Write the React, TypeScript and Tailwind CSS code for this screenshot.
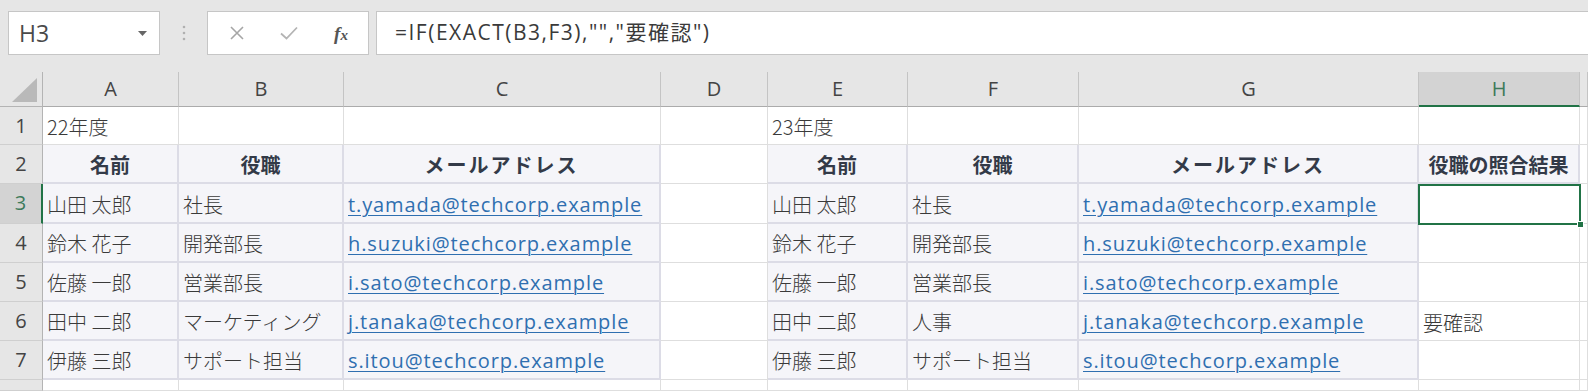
import React from "react";

const COLS = [
  { key: "A", w: 136 },
  { key: "B", w: 165 },
  { key: "C", w: 317 },
  { key: "D", w: 107 },
  { key: "E", w: 140 },
  { key: "F", w: 171 },
  { key: "G", w: 340 },
  { key: "H", w: 161 },
  { key: "I", w: 8 },
];

const ROW_H = [38, 39, 40, 39, 39, 39, 39, 11];

type Cell = { t?: string; kind?: "head" | "body" | "link" | "plain"; table?: boolean };

const people22 = [
  ["山田 太郎", "社長", "t.yamada@techcorp.example"],
  ["鈴木 花子", "開発部長", "h.suzuki@techcorp.example"],
  ["佐藤 一郎", "営業部長", "i.sato@techcorp.example"],
  ["田中 二郎", "マーケティング", "j.tanaka@techcorp.example"],
  ["伊藤 三郎", "サポート担当", "s.itou@techcorp.example"],
];
const people23 = [
  ["山田 太郎", "社長", "t.yamada@techcorp.example", ""],
  ["鈴木 花子", "開発部長", "h.suzuki@techcorp.example", ""],
  ["佐藤 一郎", "営業部長", "i.sato@techcorp.example", ""],
  ["田中 二郎", "人事", "j.tanaka@techcorp.example", "要確認"],
  ["伊藤 三郎", "サポート担当", "s.itou@techcorp.example", ""],
];

function buildRows(): Cell[][] {
  const rows: Cell[][] = [];
  rows.push([
    { t: "22年度" }, {}, {}, {}, { t: "23年度" }, {}, {}, {}, {},
  ]);
  rows.push([
    { t: "名前", kind: "head", table: true },
    { t: "役職", kind: "head", table: true },
    { t: "メールアドレス", kind: "head", table: true },
    {},
    { t: "名前", kind: "head", table: true },
    { t: "役職", kind: "head", table: true },
    { t: "メールアドレス", kind: "head", table: true },
    { t: "役職の照合結果", kind: "head", table: true },
    {},
  ]);
  for (let i = 0; i < 5; i++) {
    const a = people22[i];
    const b = people23[i];
    rows.push([
      { t: a[0], table: true },
      { t: a[1], table: true },
      { t: a[2], kind: "link", table: true },
      {},
      { t: b[0], table: true },
      { t: b[1], table: true },
      { t: b[2], kind: "link", table: true },
      { t: b[3] },
      {},
    ]);
  }
  rows.push([{}, {}, {}, {}, {}, {}, {}, {}, {}]);
  return rows;
}

const CJK = { fontFamily: '"Noto Sans CJK JP", "Noto Sans", sans-serif' };
const UI = { fontFamily: '"Open Sans", "Noto Sans", "Noto Sans CJK JP", sans-serif' };
const LINK = { fontFamily: '"Open Sans", "Noto Sans CJK JP", sans-serif' };

function CellView({ c, w, h }: { c: Cell; w: number; h: number }) {
  const base = c.table
    ? "bg-[#f5f5f9] border-r-2 border-b-2 border-[#dcdce6]"
    : "bg-white border-r border-b border-[#dedede]";
  let inner: React.ReactNode = null;
  if (c.t) {
    if (c.kind === "head") {
      inner = (
        <span
          className={`w-full text-center font-bold text-[20px] text-[#333a48] ${c.t === "メールアドレス" ? "tracking-[2px]" : ""}`}
          style={CJK}
        >
          {c.t}
        </span>
      );
    } else if (c.kind === "link") {
      inner = (
        <span
          className="pl-[4px] text-[20px] tracking-[0.9px] text-[#2f6fb0] underline underline-offset-[3px] decoration-1 whitespace-nowrap"
          style={LINK}
        >
          {c.t}
        </span>
      );
    } else {
      inner = (
        <span className="pl-[4px] text-[20px] font-light text-[#3a3a3a] whitespace-nowrap" style={CJK}>
          {c.t}
        </span>
      );
    }
  }
  return (
    <div
      className={`flex items-end pb-[3px] overflow-hidden leading-[28px] ${base}`}
      style={{ width: w, height: h }}
    >
      {inner}
    </div>
  );
}

export default function App() {
  const rows = buildRows();
  return (
    <div className="w-[1588px] h-[391px] bg-[#e6e6e6] overflow-hidden relative">
      {/* formula bar */}
      <div className="flex items-start pt-[11px] h-[72px]">
        <div className="ml-[8px] w-[152px] h-[44px] bg-white border border-[#c6c6c6] flex items-center justify-between pl-[10px] pr-[12px]">
          <span className="text-[23px] text-[#4a4a4a]" style={UI}>H3</span>
          <svg width="9" height="5" viewBox="0 0 9 5">
            <path d="M0 0 L9 0 L4.5 5 Z" fill="#666" />
          </svg>
        </div>
        <div className="w-[47px] h-[44px] flex items-center justify-center">
          <svg width="4" height="16" viewBox="0 0 4 16">
            <circle cx="2" cy="2" r="1.3" fill="#b0b0b0" />
            <circle cx="2" cy="8" r="1.3" fill="#b0b0b0" />
            <circle cx="2" cy="14" r="1.3" fill="#b0b0b0" />
          </svg>
        </div>
        <div className="w-[162px] h-[44px] bg-white border border-[#c6c6c6] flex items-center">
          <div className="w-[56px] flex justify-center pl-[1px]">
            <svg width="14" height="14" viewBox="0 0 14 14">
              <path d="M1 1 L13 13 M13 1 L1 13" stroke="#a6a6a6" strokeWidth="1.6" />
            </svg>
          </div>
          <div className="w-[50px] flex justify-center">
            <svg width="18" height="14" viewBox="0 0 18 14">
              <path d="M1 7.5 L6.5 12.5 L17 1.5" stroke="#b4b4b4" strokeWidth="1.8" fill="none" />
            </svg>
          </div>
          <div className="w-[54px] flex justify-center">
            <span
              className="italic font-bold text-[19px] text-[#555] leading-none"
              style={{ fontFamily: '"Liberation Serif", serif' }}
            >
              f<span className="text-[15px]">x</span>
            </span>
          </div>
        </div>
        <div className="ml-[7px] flex-1 h-[44px] bg-white border border-[#c6c6c6] border-r-0 flex items-center pl-[18px]">
          <span className="text-[21px] tracking-[1.5px] text-[#3a3a3a]" style={UI}>
            =IF(EXACT(B3,F3),"","要確認")
          </span>
        </div>
      </div>

      {/* column headers */}
      <div className="flex h-[35px]">
        <div className="w-[43px] h-[35px] bg-[#e6e6e6] border-r border-b border-[#b4b4b4] relative flex items-end justify-end pr-[5px] pb-[4px]">
          <svg width="25" height="24" viewBox="0 0 25 24">
            <path d="M25 0 L25 24 L0 24 Z" fill="#b9b9b9" />
          </svg>
        </div>
        {COLS.map((c) => (
          <div
            key={c.key}
            className={`h-[35px] flex items-center justify-center border-r border-[#c4c4c4] ${
              c.key === "H"
                ? "bg-[#d3d3d3] border-b-2 border-b-[#217346]"
                : "bg-[#e6e6e6] border-b border-b-[#ababab]"
            }`}
            style={{ width: c.w }}
          >
            {c.key !== "I" && (
              <span
                className={`text-[20px] ${c.key === "H" ? "text-[#3d7a5a]" : "text-[#444]"}`}
                style={UI}
              >
                {c.key}
              </span>
            )}
          </div>
        ))}
      </div>

      {/* rows */}
      {rows.map((r, ri) => (
        <div key={ri} className="flex">
          <div
            className={`w-[43px] flex items-start justify-center border-b border-[#cfcfcf] ${
              ri === 2 ? "bg-[#d3d3d3] border-r-2 border-r-[#217346] text-[#3d7a5a]" : "bg-[#e6e6e6] border-r border-r-[#b4b4b4] text-[#444]"
            }`}
            style={{ height: ROW_H[ri] }}
          >
            <span className="text-[20px] leading-[38px]" style={UI}>
              {ri + 1}
            </span>
          </div>
          {r.map((c, ci) => (
            <CellView key={ci} c={c} w={COLS[ci].w} h={ROW_H[ri]} />
          ))}
        </div>
      ))}

      {/* selection overlay on H3 */}
      <div className="absolute left-[1418px] top-[184px] w-[163px] h-[41px] border-2 border-[#217346] pointer-events-none" />
      <div className="absolute left-[1577px] top-[221px] w-[7px] h-[7px] bg-[#217346] border border-white pointer-events-none" />
    </div>
  );
}
